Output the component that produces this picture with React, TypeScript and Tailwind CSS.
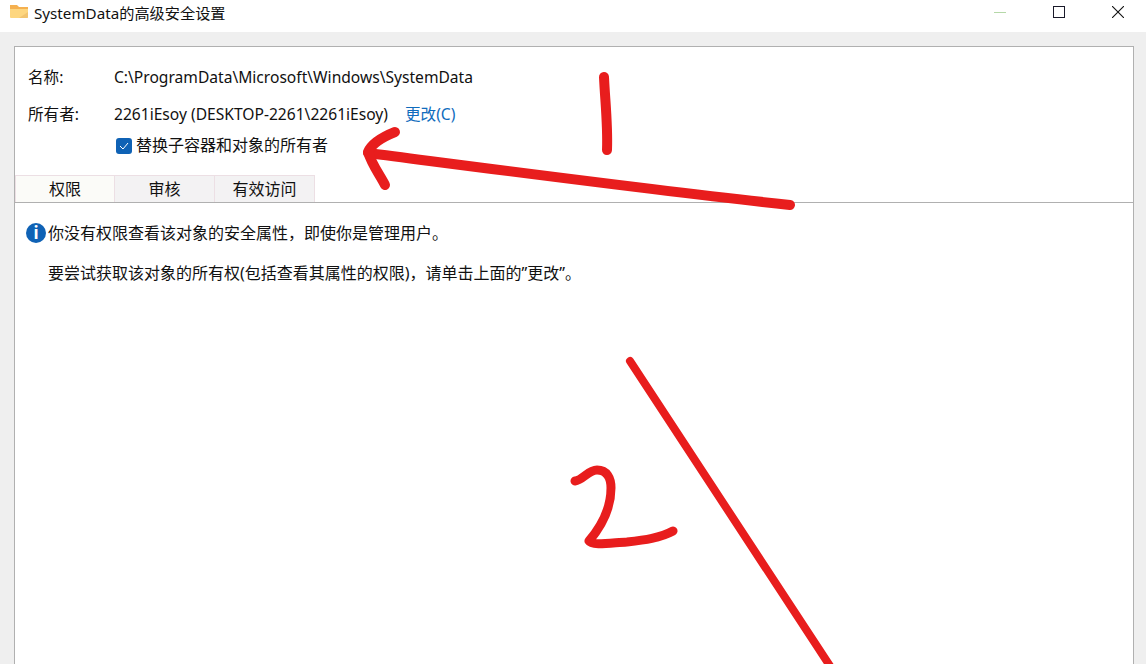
import React from "react";

const font = { fontFamily: '"Noto Sans", "Noto Sans CJK SC", sans-serif' };

function Folder() {
  return (
    <svg width="18" height="16" viewBox="0 0 18 16" className="shrink-0 -mt-[8px]">
      <path d="M0 1 H7 L9 3 H18 V5 H0 Z" fill="#f5b04f" />
      <path d="M0 5 H18 V13 A1 1 0 0 1 17 14 H1 A1 1 0 0 1 0 13 Z" fill="#fdd67f" />
      <path d="M9 14 L18 8 V13 A1 1 0 0 1 17 14 Z" fill="#f2c46f" />
    </svg>
  );
}

function Annotations() {
  return (
    <svg className="absolute inset-0 pointer-events-none" width="1146" height="664" viewBox="0 0 1146 664" fill="none" stroke="#e81d1d" strokeLinecap="round" strokeLinejoin="round">
      <path d="M604 77 C605 100 608 125 607 150" strokeWidth="10" />
      <path d="M790 205 C650 190 500 170 368 153" strokeWidth="10" />
      <path d="M395 132 C385 136 372 143 368 152 C372 165 380 175 385 185" strokeWidth="10" />
      <path d="M630 361 L830 666" strokeWidth="8" />
      <path d="M575 481 C583 480 588 470 597 470 C607 470 611 478 611 488 C611 510 600 528 589 541 C592 546 610 543 627 542 C645 540 660 538 673 531" strokeWidth="9" />
    </svg>
  );
}

export default function App() {
  return (
    <div className="relative w-[1146px] h-[664px] overflow-hidden bg-[#efefef] text-[15.6px] text-[#111111] flex flex-col" style={font}>
      <div className="h-8 shrink-0 bg-white flex items-center pl-[10px]">
        <Folder />
        <span className="ml-[6px] text-[15.2px] -mt-[5px]">SystemData的高级安全设置</span>
        <div className="ml-auto flex items-center pr-[22px] -mt-[8px]">
          <div className="w-3 h-px bg-[#b5d8a8]" />
          <div className="ml-[47px] w-[12px] h-[12px] border-[1.5px] border-[#1a1a2a]" />
          <svg className="ml-[47px]" width="12" height="12" viewBox="0 0 12 12" stroke="#111" strokeWidth="1.1">
            <path d="M0 0 L12 12 M12 0 L0 12" />
          </svg>
        </div>
      </div>
      <div className="flex-1 bg-[#efefef] pl-[14px] pr-[12px] pt-[14px] flex flex-col min-h-0">
        <div className="flex-1 bg-white border-t border-x border-[#b0b0b0] flex flex-col h-[700px]">
          <div className="pl-[13px] pt-[18px] h-[128px] shrink-0">
            <div className="flex items-center h-[26px]">
              <span className="w-[86px]">名称:</span>
              <span>C:\ProgramData\Microsoft\Windows\SystemData</span>
            </div>
            <div className="flex items-center h-[26px] mt-[11px]">
              <span className="w-[86px]">所有者:</span>
              <span>2261iEsoy (DESKTOP-2261\2261iEsoy)</span>
              <span className="ml-[17px] text-[#0f6cbd]">更改(C)</span>
            </div>
            <div className="flex items-center h-[24px] mt-[6px] ml-[88px]">
              <span className="w-4 h-4 rounded-[3px] bg-[#0f62b5] flex items-center justify-center">
                <svg width="10" height="8" viewBox="0 0 10 8" fill="none" stroke="#fff" strokeWidth="1">
                  <path d="M1 4 L4 7 L9 1" />
                </svg>
              </span>
              <span className="ml-[4px] text-[16px] -mt-[2px]">替换子容器和对象的所有者</span>
            </div>
          </div>
          <div className="flex h-[28px] shrink-0 border-b border-[#b0b0b0] relative text-[16px]">
            <div className="w-[100px] bg-[#fbfbf8] border-t border-x border-[#ecdfe4] flex items-center justify-center">权限</div>
            <div className="w-[100px] bg-[#f3f2f3] border-t border-r border-[#ecdfe4] flex items-center justify-center">审核</div>
            <div className="w-[100px] bg-[#f3f2f3] border-t border-r border-[#ecdfe4] flex items-center justify-center">有效访问</div>
          </div>
          <div className="pl-[11px] pt-[18px] text-[16px]">
            <div className="flex items-center h-[24px]">
              <span className="w-[20px] h-[20px] rounded-full bg-[#0f62b5] text-white flex items-center justify-center text-[17px] font-bold shrink-0">i</span>
              <span className="ml-[2px]">你没有权限查看该对象的安全属性&#xFF0C;即使你是管理用户。</span>
            </div>
            <div className="ml-[22px] mt-[16px] h-[24px] flex items-center">要尝试获取该对象的所有权(包括查看其属性的权限)&#xFF0C;请单击上面的”更改”。</div>
          </div>
        </div>
      </div>
      <Annotations />
    </div>
  );
}
